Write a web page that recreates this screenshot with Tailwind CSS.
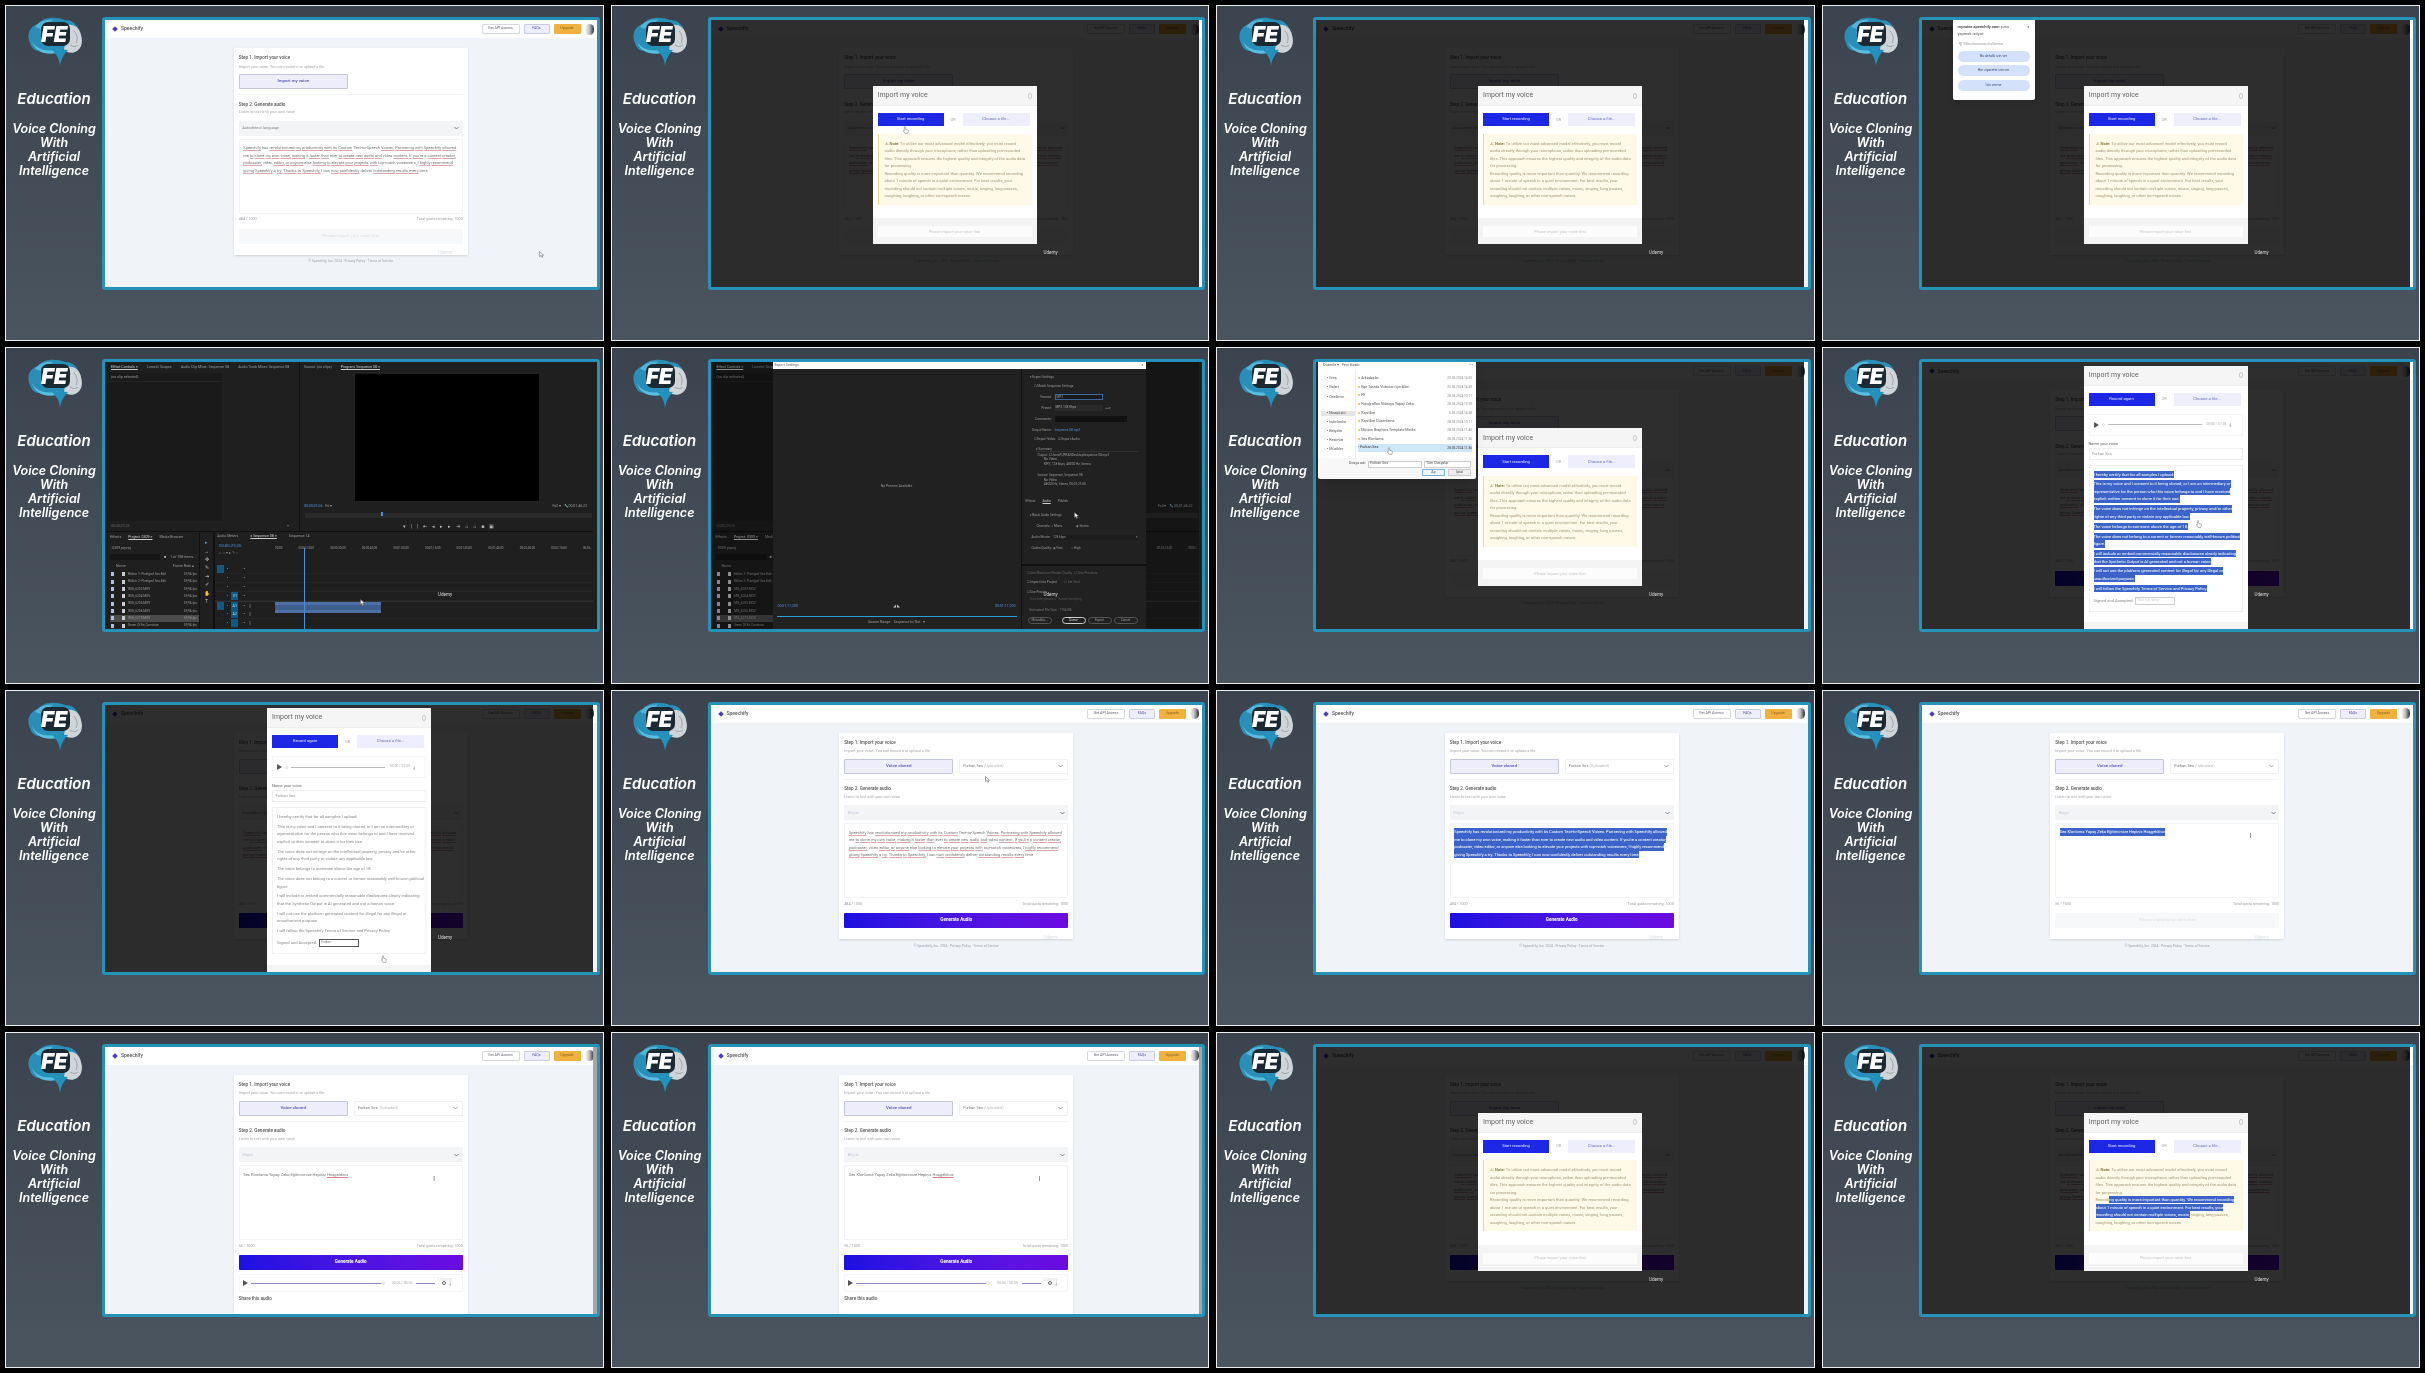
<!DOCTYPE html>
<html lang="en">

<head>
    <meta charset="UTF-8">
    <meta name="viewport" content="width=device-width, initial-scale=1.0">
    <title>Voice Cloning With Artificial Intelligence</title>
    <script src="https://cdn.jsdelivr.net/npm/@tailwindcss/browser@4"></script>
</head>

<body class="bg-black">
    <!-- Contact sheet: 4 x 4 video frames -->
    <div id="sheet" class="grid grid-cols-4 grid-rows-4 gap-x-[7px] gap-y-[6px] p-[5px] w-[2425px] h-[1373px] bg-black overflow-hidden blur-[0.35px] [font-family:Roboto,sans-serif]"></div>

    <script>
        // Side column logo, FE stays real text
        var logo = `
            <svg width="55" height="49" viewBox="0 0 55 49">
                <path d="M3 26C-1 18 3 9 11 7C16 0 28-1 38 3C46 3 50 8 52 13L40 30C34 36 20 36 12 34C7 34 4 30 3 26Z" fill="#2a8fb8"/>
                <path d="M41 8C48 7 53 12 54 18C56 24 55 31 50 34C46 37 40 36 37 33Z" fill="#cfd4d8"/>
                <path d="M47 14C50 17 51 22 49 26M43 28C46 30 49 30 51 28" fill="none" stroke="#9aa3aa" stroke-width="1"/>
                <path d="M8 10C12 4 20 2 26 3L14 12Z" fill="#53b5d8"/>
                <path d="M5 24C10 34 22 35 31 32L30 36C20 38 8 36 5 24Z" fill="#57bfe0"/>
                <path d="M24 32C29 37 32 40 33 49C34 43 36 38 41 33Z" fill="#2292bd"/>
                <rect x="14" y="5" width="29" height="24" rx="7" fill="#1b2933"/>
                <text x="14" y="25" font-family="Inter" font-size="22" font-weight="900" font-style="italic" fill="#fff">FE</text>
            </svg>`;

        var arrow = (x, y) => `<svg class="absolute z-40" style="left:${x}px;top:${y}px" width="5" height="7" viewBox="0 0 5 7"><path d="M.5.5V5.6L1.8 4.5 2.8 6.5 3.7 6 2.8 4.1H4.5Z" fill="#fff" stroke="#555" stroke-width=".5"/></svg>`;
        var hand = (x, y) => `<svg class="absolute z-40" style="left:${x}px;top:${y}px" width="6" height="8" viewBox="0 0 6 8"><path d="M2 .6C2.6.6 2.7 1 2.7 1.4V3.4L5 4C5.5 4.2 5.6 4.6 5.4 5.2L4.8 7.4H2L.5 5C.3 4.5.8 4.1 1.3 4.6V1.4C1.3 1 1.4.6 2 .6Z" fill="#fff" stroke="#666" stroke-width=".5"/></svg>`;
        var ibeam = (x, y) => `<div class="absolute z-40 text-[8px] leading-none text-[#777]" style="left:${x}px;top:${y}px">I</div>`;

        var chevron = (color) => `<svg width="5" height="4" viewBox="0 0 5 4"><path d="M.5 1 2.5 3 4.5 1" fill="none" stroke="${color}" stroke-width=".8"/></svg>`;

        var plainWords = new Set(['has', 'me', 'it', 'ever', 'video', 'a', 'else', 'top-notch', 'voiceovers,', 'I', 'can', 'deliver', 'time.', 'Text-to-Speech']);
        var speechLines = [
            "Speechify has revolutionized my productivity with its Custom Text-to-Speech Voices. Partnering with Speechify allowed",
            "me to clone my own voice, making it faster than ever to create new audio and video content. If you're a content creator,",
            "podcaster, video editor, or anyone else looking to elevate your projects with top-notch voiceovers, I highly recommend",
            "giving Speechify a try. Thanks to Speechify, I can now confidently deliver outstanding results every time."
        ];
        var spell = (line) => line.split(' ').map(w => plainWords.has(w) ? w :
            `<span class="underline decoration-[#dca4ac]">${w}</span>`).join(' ');
        var sel = (t) => `<span class="bg-[#3b63c8] text-white py-[1.2px]">${t}</span>`;

        var textareaBody = (opts) => {
            if (opts.short && opts.selected) return sel('Ses Klonlama Yapay Zeka Eğitimimize Hepiniz Hoşgeldiniz');
            if (opts.short) return `Ses Klonlama Yapay Zeka Eğitimimize Hepiniz <span class="underline decoration-[#d9808c]">Hoşgeldiniz</span>`;
            if (opts.selected) return speechLines.map(sel).join('<br>');
            return speechLines.map(spell).join('<br>');
        };

        // The Speechify page behind everything else
        var page = (opts = {}) => `
            <div class="flex flex-col h-full bg-[#f0f3f7]">
                <header class="flex items-center h-[18px] shrink-0 bg-white pl-[8px] pr-[3px]">
                    <div class="w-[4px] h-[4px] rotate-45 bg-[#4a3fc4]"></div>
                    <span class="ml-[4px] text-[5px] font-medium text-[#555]">Speechify</span>
                    <div class="flex items-center gap-[4px] ml-auto">
                        <div class="flex items-center justify-center w-[38px] h-[10px] rounded-[1px] border border-[#d5d8dd] bg-white text-[3.6px] text-[#667]">Get API Access</div>
                        <div class="flex items-center justify-center w-[26px] h-[10px] rounded-[1px] border border-[#c9cbe0] bg-[#eeedfc] text-[3.6px] text-[#5a5aa0]">FAQs</div>
                        <div class="flex items-center justify-center w-[27px] h-[10px] rounded-[1px] bg-[#f0b13f] text-[3.6px] text-[#8a6a20]">Upgrade</div>
                        <div class="w-[9px] h-[11px] rounded-full bg-linear-to-r from-white via-[#bbb] to-[#333]"></div>
                    </div>
                </header>
                <main class="flex flex-col items-center pt-[10px]">
                    <div class="w-[234px] shrink-0 rounded-[1px] bg-white shadow-sm px-[5px] pt-[7px] pb-[11px]">
                        <div class="h-[6px] text-[4.6px] leading-[6px] font-medium text-[#555]">Step 1. Import your voice</div>
                        <div class="mt-[2.5px] h-[5px] text-[3.8px] leading-[5px] text-[#a4a8ad]">Import your voice. You can record it or upload a file.</div>
                        <div class="flex gap-[6px] mt-[5.5px]">
                            <div class="flex items-center justify-center w-[109px] h-[15px] rounded-[1px] border border-[#c3c5d8] bg-[#eeedfc] text-[4.4px] font-medium text-[#5552b8]">${opts.cloned ? 'Voice cloned' : 'Import my voice'}</div>
                            ${opts.cloned ? `<div class="flex items-center justify-between w-[109px] h-[15px] rounded-[1px] border border-[#eef0f2] pl-[3px] pr-[4px] text-[4px] text-[#777]"><span>Furkan Ses <span class="text-[#bbb]">(Uploaded)</span></span>${chevron('#888')}</div>` : ''}
                        </div>
                        <div class="mt-[5px] border-t border-[#f3f4f6]"></div>
                        <div class="mt-[6.5px] h-[6px] text-[4.6px] leading-[6px] font-medium text-[#555]">Step 2. Generate audio</div>
                        <div class="mt-[1.5px] h-[5px] text-[3.8px] leading-[5px] text-[#a4a8ad]">Listen to text with your own voice</div>
                        <div class="flex items-center justify-between h-[15px] mt-[6.5px] rounded-[1px] bg-[#f3f4f6] px-[3.5px] text-[4px] ${opts.cloned ? 'text-[#ccd]' : 'text-[#888]'}">
                            <span>${opts.cloned ? 'Bilgisi' : 'Autodetect language'}</span>${chevron('#667')}
                        </div>
                        <div class="h-[75px] mt-[3px] rounded-[1px] border border-[#f3f4f6] px-[3.5px] pt-[4.5px] text-[4.05px] leading-[7.5px] whitespace-nowrap text-[#777]">${textareaBody(opts)}</div>
                        <div class="flex justify-between h-[5px] mt-[3.5px] text-[3.7px] leading-[5px] text-[#9a9ea4]">
                            <span>${opts.short ? '56 / 1000' : '484 / 1000'}</span><span>Total quota remaining: 1000</span>
                        </div>
                        ${opts.active
                            ? `<div class="flex items-center justify-center h-[15px] mt-[6.5px] rounded-[1px] bg-linear-to-r from-[#1c10e2] to-[#6c0ae2] text-[4.6px] font-bold text-white">Generate Audio</div>`
                            : `<div class="flex items-center justify-center h-[15px] mt-[6.5px] rounded-[1px] bg-[#f7f8f9] text-[4.4px] text-[#dcdee0]">Please import your voice first</div>`}
                        ${opts.audio ? `
                            <div class="flex items-center gap-[3px] h-[18px] mt-[4px] px-[3px] rounded-[1px] border border-[#f5f5f7]">
                                <div class="w-0 h-0 border-y-[3px] border-y-transparent border-l-[5px] border-l-[#555]"></div>
                                <div class="w-[130px] h-[1.5px] bg-[#8a86c8]"></div>
                                <div class="w-[4px] h-[4px] -ml-[3px] rounded-full border border-[#e5e5e5] bg-white"></div>
                                <span class="ml-[4px] text-[3.5px] text-[#aaa] whitespace-nowrap">00:06 / 00:06</span>
                                <div class="w-[19px] h-[1.5px] ml-[1px] bg-[#8a86c8]"></div>
                                <div class="w-[4px] h-[4px] ml-[4px] rounded-full border-[1.5px] border-[#666]"></div>
                                <div class="text-[5px] leading-none text-[#666]">⤓</div>
                            </div>
                            <div class="mt-[4px] text-[4.6px] font-medium text-[#555]">Share this audio</div>` : ''}
                    </div>
                    ${opts.audio ? '' : `<div class="mt-[4.5px] h-[5px] text-[3.4px] leading-[5px] text-[#a0a4aa]">© Speechify, Inc. 2024 · Privacy Policy · Terms of Service</div>`}
                </main>
            </div>
            ${opts.audio ? '<div class="absolute top-0 bottom-0 right-0 w-[3.5px] bg-[#a4a6a8]"></div>' : ''}`;

        var noteLines = [
            `<span class="text-[#8a7428]">⚠</span> <b class="font-medium text-[#7d6a2c]">Note:</b> To utilize our most advanced model effectively, you must record`,
            `audio directly through your microphone, rather than uploading pre-recorded`,
            `files. This approach ensures the highest quality and integrity of the audio data`,
            `for processing.`,
            `Recording quality is more important than quantity. We recommend recording`,
            `about 1 minute of speech in a quiet environment. For best results, your`,
            `recording should not contain multiple voices, music, singing, long pauses,`,
            `coughing, laughing, or other non-speech noises.`
        ];
        var noteSelected = noteLines.slice(0, 4).concat([
            `Recordi${sel('ng quality is more important than quantity. We recommend recording')}`,
            sel('about 1 minute of speech in a quiet environment. For best results, your'),
            `${sel('recording should not contain multiple voices, music,')} singing, long pauses,`,
            `coughing, laughing, or other non-speech noises.`
        ]);

        var modalHead = (recordLabel) => `
            <div class="flex items-center justify-between h-[20px] bg-[#f5f5f5] px-[5px] border-b border-[#eee]">
                <span class="text-[7px] text-[#666]">Import my voice</span>
                <div class="w-[4px] h-[6px] rounded-full border border-[#ccc]"></div>
            </div>
            <div class="flex items-center h-[13px] mt-[7px] px-[5px]">
                <div class="flex items-center justify-center w-[66px] h-[13px] bg-[#1d27e6] text-[4.2px] text-[#dfe1ff]">${recordLabel}</div>
                <div class="w-[19px] text-center text-[4px] text-[#aaa]">OR</div>
                <div class="flex items-center justify-center w-[67px] h-[13px] bg-[#eeeefc] text-[4.2px] text-[#6f72c2]">Choose a file...</div>
            </div>`;

        // First look of the import dialog, with the note
        var noteModal = (selected) => `
            <div class="absolute inset-0 right-[3.5px] bg-black/[.82]"></div>
            <div class="absolute left-[162px] top-[66px] w-[164px] h-[158px] flex flex-col bg-white rounded-[1px]">
                ${modalHead('Start recording')}
                <div class="mx-[5px] mt-[7.5px] h-[71px] border-l border-[#ecd48c] bg-[#fff9e8] pl-[6px] pt-[6px] text-[4.1px] leading-[7.5px] whitespace-nowrap text-[#a49a78]">
                    ${(selected ? noteSelected : noteLines).join('<br>')}
                </div>
                <div class="mt-auto h-[26px] bg-[#f4f4f4] px-[5px] pt-[8px]">
                    <div class="flex items-center justify-center h-[11px] bg-white/70 text-[4px] text-[#c6c8cc]">Please import your voice first</div>
                </div>
            </div>`;

        var consentLines = [
            ['I hereby certify that for all samples I upload:'],
            ['This is my voice and I consent to it being cloned, or I am an intermediary or', 'representative for the person who this voice belongs to and I have received', 'explicit written consent to clone it for their use.'],
            ['The voice does not infringe on the intellectual property, privacy and/or other', 'rights of any third party or violate any applicable law.'],
            ['The voice belongs to someone above the age of 18.'],
            ['The voice does not belong to a current or former reasonably well-known political', 'figure.'],
            ['I will include or embed commercially reasonable disclosures clearly indicating', 'that the Synthetic Output is AI generated and not a human voice.'],
            ['I will not use the platform generated content for illegal for any illegal or', 'unauthorized purpose.'],
            ['I will follow the Speechify Terms of Service and Privacy Policy.']
        ];

        // Dialog after recording, consent text on show
        var consentModal = (selected, typed) => `
            <div class="absolute inset-0 right-[3.5px] bg-black/[.82]"></div>
            <div class="absolute left-[162px] top-[3.5px] bottom-0 w-[164px] flex flex-col bg-white overflow-hidden">
                ${modalHead('Record again')}
                <div class="flex items-center gap-[3px] h-[22px] mt-[8px] mx-[5px] border border-[#f5f5f5] px-[4px]">
                    <div class="w-0 h-0 border-y-[3.5px] border-y-transparent border-l-[5px] border-l-[#555]"></div>
                    <div class="w-[3px] h-[3px] rounded-full border border-[#ddd]"></div>
                    <div class="w-[94px] h-[1px] bg-[#bbb]"></div>
                    <span class="ml-[2px] text-[3.4px] text-[#aaa] whitespace-nowrap">00:00 / 01:03</span>
                    <span class="text-[5px] leading-none text-[#666]">⤓</span>
                </div>
                <div class="mt-[5px] mx-[5px] text-[4px] leading-[5px] text-[#666]">Name your voice</div>
                <div class="flex items-center h-[12px] mt-[2px] mx-[5px] border border-[#eee] px-[2.5px] text-[4px] text-[#999]">Furkan Ses</div>
                <div class="h-[147px] mt-[5px] mx-[5px] border border-[#f0f0f0] px-[4px] pt-[5px] text-[4.15px] leading-[7.5px] whitespace-nowrap text-[#8a8a8a] flex flex-col gap-[2.4px]">
                    ${consentLines.map(block => `<div>${block.map(l => selected ? sel(l) : l).join('<br>')}</div>`).join('')}
                    <div class="flex items-center gap-[2px] mt-[2px]">
                        <span>Signed and Accepted:</span>
                        <div class="flex items-center w-[40px] h-[8px] border ${typed ? 'border-[#555] text-[#777]' : 'border-[#ccc] text-[#ccc]'} px-[1px] text-[3.4px]">${typed ? 'Furkan' : 'Your full name'}</div>
                    </div>
                </div>
                <div class="mt-auto h-[7px] bg-[#f4f4f4]"></div>
            </div>`;

        // Chrome mic prompt (Turkish browser)
        var micPrompt = `
            <div class="absolute left-[31px] top-0 z-30 w-[82px] h-[80px] rounded-b-[2px] bg-white shadow-md px-[5px] pt-[3px] text-[#555]">
                <div class="flex justify-between text-[4px] leading-[7px]"><span><b class="font-medium text-[#333]">myvoice.speechify.com</b> şunu<br>yapmak istiyor:</span><span>×</span></div>
                <div class="mt-[5px] text-[3.6px] text-[#999]">🎙 Mikrofonunuzu kullanma</div>
                ${['Bu defalık izin ver', 'Her ziyarette izin ver', 'İzin verme'].map(t =>
                    `<div class="flex items-center justify-center h-[11px] mt-[3.5px] rounded-full bg-[#d4e1fb] text-[3.5px] text-[#3d4f78]">${t}</div>`).join('')}
            </div>`;

        // Windows open-file dialog
        var fileRows = [
            ['Arkadaşlar', '23.05.2024 14:30'],
            ['Ege Tarzda Videoları İçerikleri', '23.05.2024 14:30'],
            ['FE', '28.05.2024 10:11'],
            ['Fotoğrafları Videoya Yapay Zeka', '28.05.2024 13:10'],
            ['Kapitlice', '5.05.2024 14:50'],
            ['Kapitlice Düzenleme', '28.05.2024 10:11'],
            ['Motion Graphics Template Media', '28.05.2024 11:40'],
            ['Ses Klonlama', '28.05.2024 11:36']
        ];
        var fileDialog = `
            <div class="absolute left-[2px] top-0 z-30 w-[158px] h-[117px] flex flex-col bg-[#f8f8f8] rounded-b-[2px] shadow-lg text-[3.7px] text-[#555]">
                <div class="flex justify-between items-center h-[7px] bg-white pl-[5px] pr-[3px]"><span>Düzenle ▾ &nbsp; Yeni klasör</span><span class="text-[#3a86c8]">▪ ▪</span></div>
                <div class="flex h-[89px] bg-white">
                    <div class="flex flex-col gap-[3.6px] w-[38px] pt-[7px] pl-[9px] border-r border-[#eee]">
                        <span>▪ Giriş</span><span>▪ Galeri</span><span>▪ OneDrive</span><span class="mt-[7px] -ml-[6px] pl-[6px] bg-[#e6e6e6]">▪ Masaüstü</span><span>▪ İndirilenler</span><span>▪ Belgeler</span><span>▪ Resimler</span><span>▪ Müzikler</span>
                    </div>
                    <div class="flex-1 pl-[2px] pr-[4px] pt-[5px]">
                        ${fileRows.map(r => `<div class="flex justify-between h-[8.7px] items-center"><span><span class="text-[#e9c04c]">■</span> ${r[0]}</span><span class="text-[#888] text-[3.2px]">${r[1]}</span></div>`).join('')}
                        <div class="flex justify-between h-[8.7px] items-center bg-[#cde6f7] text-[#333]"><span><span class="text-[#777]">▪</span> Furkan Ses</span><span class="text-[3.2px]">28.05.2024 11:36</span></div>
                    </div>
                </div>
                <div class="flex items-center justify-end gap-[2px] h-[10px] pr-[5px] mt-[1px]">
                    <span>Dosya adı:</span><div class="flex items-center w-[54px] h-[7px] border border-[#ccc] bg-white px-[1px]">Furkan Ses</div><div class="flex items-center w-[47px] h-[7px] border border-[#ccc] bg-white px-[1px]">Tüm Dosyalar</div>
                </div>
                <div class="flex justify-end gap-[3px] pr-[5px]">
                    <div class="flex items-center justify-center w-[23px] h-[7px] border border-[#7fb3d9] bg-[#eef5fa]">Aç</div>
                    <div class="flex items-center justify-center w-[23px] h-[7px] border border-[#ccc] bg-[#eee]">İptal</div>
                </div>
            </div>`;

        // Premiere Pro project, used by two frames
        var projectRows = ['Bölüm 1- Pixelgraf Ses.Edit', 'Bölüm 2- Pixelgraf Ses.Edit', 'IMG_6203.MOV', 'IMG_6204.MOV', 'IMG_6205.MOV', 'IMG_6206.MOV', 'IMG_6279.MOV', 'Green Of Es Construe'];
        var rulerMarks = ['00;00', '00;00;15;00', '00;00;30;00', '00;00;45;00', '00;01;00;00', '00;01;15;00', '00;01;30;00', '00;01;45;00', '00;02;00;00', '00;02;15;00', '00;02;'];
        var premiere = (timecode) => `
            <div class="flex flex-col h-full bg-[#1f1f1f] text-[3.6px] text-[#999] pr-[3.5px]">
                <div class="flex h-[170px] shrink-0 border-b border-[#111]">
                    <div class="w-[195px] border-r border-[#111] flex flex-col">
                        <div class="flex gap-[9px] h-[11px] items-center pl-[6px]"><span class="text-[#ccc] underline">Effect Controls ≡</span><span>Lumetri Scopes</span><span>Audio Clip Mixer: Sequence 08</span><span>Audio Track Mixer: Sequence 08</span></div>
                        <div class="flex flex-1">
                            <div class="w-[113px] ml-[4px] bg-[#1a1a1a] flex flex-col">
                                <div class="flex items-center h-[9px] pl-[2px] border-b border-[#252525]">(no clip selected)</div>
                            </div>
                            <div class="flex-1"></div>
                        </div>
                        <div class="flex justify-between items-center h-[10px] px-[6px] text-[#666]"><span>00;00;29;26</span><span>▾ ▫ ▫</span></div>
                    </div>
                    <div class="flex-1 flex flex-col pl-[4px]">
                        <div class="flex gap-[9px] h-[11px] items-center"><span>Source: (no clips)</span><span class="text-[#ccc] underline">Program: Sequence 08 ≡</span></div>
                        <div class="w-[184px] h-[127px] ml-[51px] mt-[1px] bg-black"></div>
                        <div class="flex justify-between items-center h-[9px] mt-[1px] pr-[6px]"><span class="text-[#4f8fdc]">00;00;29;26 &nbsp; <span class="text-[#999]">Fit ▾</span></span><span>Full ▾ &nbsp; 🔧 00;01;46;22</span></div>
                        <div class="relative h-[5px] mx-[1px] mt-[2px] bg-[#2a2a2a]"><div class="absolute left-[76px] -top-[1px] w-[2px] h-[4px] bg-[#4f8fdc]"></div></div>
                        <div class="flex justify-center gap-[5px] mt-[6px] text-[5px] leading-none text-[#bbb]"><span>▾</span><span>|</span><span>|</span><span>⇤</span><span>◂</span><span>▸</span><span>▸</span><span>⇥</span><span>⌂</span><span>⌂</span><span>■</span><span>▣</span></div>
                    </div>
                </div>
                <div class="flex flex-1 overflow-hidden">
                    <div class="w-[95px] flex flex-col border-r border-[#111] pl-[5px]">
                        <div class="flex gap-[7px] h-[10px] items-center mt-[1px]"><span>Effects</span><span class="text-[#ccc] underline">Project: 0309 ≡</span><span>Media Browser</span></div>
                        <div class="h-[9px] leading-[9px] mt-[1px]">▫ 0309.prproj</div>
                        <div class="flex items-center gap-[4px] mt-[1px] h-[7px]"><div class="w-[50px] h-[6px] bg-[#151515]"></div><span class="text-[#bbb]">■</span><span>1 of 108 items...</span></div>
                        <div class="flex justify-between h-[8px] items-center mt-[2px] pl-[6px] pr-[5px]"><span>Name</span><span>Frame Rate ▴</span></div>
                        ${projectRows.map((name, i) => `
                            <div class="flex items-center h-[7.5px] pl-[1px] pr-[2px] ${i === 6 ? 'bg-[#4b4b4b]' : ''}">
                                <div class="w-[3px] h-[4px] bg-[#b5bfe0]"></div>
                                <div class="w-[3px] h-[4px] ml-[8px] bg-[#ccc]"></div>
                                <span class="w-[43px] ml-[3px] overflow-hidden whitespace-nowrap text-[3.2px]">${name}</span>
                                <span class="ml-auto text-[3.2px]">59,94 fps</span>
                            </div>`).join('')}
                    </div>
                    <div class="w-[14px] flex flex-col items-center gap-[2.4px] pt-[7px] text-[5px] leading-[6px] text-[#bbb] border-r border-[#111]">
                        <span class="text-[#4f9ae0]">▸</span><span>→</span><span>✥</span><span>✎</span><span>⇥</span><span>✐</span><span>✋</span><span>T</span>
                    </div>
                    <div class="flex-1 flex flex-col relative border-l border-[#111]">
                        <div class="flex gap-[12px] items-center h-[9px] pl-[2px]"><span>Audio Meters</span><span class="text-[#ccc] underline">× Sequence 08 ≡</span><span>Sequence 14</span></div>
                        <div class="flex h-[24px] shrink-0">
                            <div class="w-[60px] pl-[4px] pt-[2px] text-[#4f8fdc] text-[4.4px]">${timecode}<div class="text-[4px] text-[#888]">⌂ ∩ ▾ ▸ ✎ ▫</div></div>
                            <div class="flex-1 flex justify-between pr-[2px] pt-[5px] text-[3px]">${rulerMarks.map(m => `<span>${m}</span>`).join('')}</div>
                        </div>
                        ${['', '', '', 'V1', 'A1', 'A2', 'Audio 1'].map((t, i) => `
                            <div class="flex items-stretch h-[9px] shrink-0 ${i === 4 ? 'border-t border-[#333]' : 'border-b border-[#252525]'}">
                                <div class="flex items-center gap-[3px] w-[60px] pl-[2px]">
                                    <span class="w-[7px] h-full ${i === 0 || i === 4 ? 'bg-[#0f5a85]' : ''}"></span>
                                    <span>▪</span>
                                    <span class="flex items-center justify-center w-[7px] h-full ${i > 2 ? 'bg-[#0f5a85] text-[#cde]' : ''}">${t && t.length < 3 ? t : ''}</span>
                                    <span>▫ ∘</span>${i > 3 ? '<span>▯</span>' : ''}
                                </div>
                                <div class="flex-1 relative">${i === 4 ? '<div class="absolute left-0 top-0 w-[106px] h-[11px] z-10 bg-[#3e5e8e] border-y-[3px] border-[#4e6fa3]"></div>' : ''}</div>
                            </div>`).join('')}
                        <div class="absolute left-[89px] top-[16px] bottom-0 w-[0.7px] bg-[#4f8fdc] z-20"></div>
                    </div>
                </div>
            </div>`;

        // Export Settings window over the project
        var exportWindow = `
            <div class="absolute inset-0 right-[3.5px] z-30 bg-black/30"></div>
            <div class="absolute left-[62px] top-0 bottom-0 z-30 w-[373px] flex flex-col bg-[#212121] text-[3.6px] text-[#999]">
                <div class="flex justify-between items-center h-[7px] shrink-0 bg-white px-[2px] text-[#666]"><span>Export Settings</span><span>×</span></div>
                <div class="flex flex-1">
                    <div class="relative w-[251px] flex flex-col border-r border-[#111]">
                        <div class="flex-1 flex items-center justify-center text-[3.4px]">No Preview Available</div>
                        <div class="flex justify-between h-[5px] leading-[5px] px-[5px] text-[#4f8fdc]"><span>00;01;11;200</span><span class="text-[#bbb]">◢ ◣</span><span>00;01;11;200</span></div>
                        <div class="h-[1.5px] mx-[4px] mt-[7px] bg-[#2aa0d8]"></div>
                        <div class="h-[10px] mb-[2px] flex items-center justify-center">Source Range: &nbsp; Sequence In/Out &nbsp; ▾</div>
                    </div>
                    <div class="flex-1 flex flex-col pl-[8px] pr-[8px] pt-[5.5px] text-[3.2px] leading-[5px]">
                        <div class="h-[5px]">▾ Export Settings</div>
                        <div class="h-[5px] mt-[4px] ml-[4px]">☐ Match Sequence Settings</div>
                        <div class="flex gap-[3px] items-center h-[6px] mt-[5.5px]"><span class="w-[22px] text-right">Format:</span><div class="w-[48px] h-[6px] px-[1px] bg-[#1a1a1a] border border-[#3c6aa0]">MP3</div></div>
                        <div class="flex gap-[3px] items-center h-[6px] mt-[5px]"><span class="w-[22px] text-right">Preset:</span><div class="w-[48px] h-[6px] px-[1px] bg-[#2a2a2a]">MP3 128 Kbps</div><span class="text-[#bbb]">▪ ▪ ▯</span></div>
                        <div class="flex gap-[3px] items-center h-[6px] mt-[5px]"><span class="w-[22px] text-right">Comments:</span><div class="w-[72px] h-[6px] bg-[#111]"></div></div>
                        <div class="flex gap-[3px] items-center h-[5px] mt-[5.5px]"><span class="w-[22px] text-right">Output Name:</span><span class="text-[#4f8fdc]">Sequence 08.mp3</span></div>
                        <div class="h-[5px] mt-[4px] ml-[4px]">☐ Export Video &nbsp; ☑ Export Audio</div>
                        <div class="h-[5px] mt-[5px] ml-[6px] border-b border-[#333]">▾ Summary</div>
                        <div class="ml-[8px] mt-[1px] leading-[4.5px]">Output: C:\Users\FURKAN\Desktop\Sequence 08.mp3<br>&nbsp; &nbsp; &nbsp; &nbsp; No Video<br>&nbsp; &nbsp; &nbsp; &nbsp; MP3, 128 kbps, 48000 Hz, Stereo</div>
                        <div class="ml-[8px] mt-[7px] leading-[4.5px]">Source: Sequence, Sequence 08<br>&nbsp; &nbsp; &nbsp; &nbsp; No Video<br>&nbsp; &nbsp; &nbsp; &nbsp; 48000 Hz, Stereo, 00;01;21;00</div>
                        <div class="flex gap-[7px] h-[5px] mt-[12px] -ml-[4px]"><span>Effects</span><span class="text-[#ccc] underline">Audio</span><span>Publish</span></div>
                        <div class="h-[5px] mt-[9px]">▾ Basic Audio Settings</div>
                        <div class="h-[5px] mt-[6px] ml-[7px]">Channels: ○ Mono &nbsp; &nbsp; &nbsp; &nbsp; &nbsp; &nbsp; &nbsp; &nbsp; ◉ Stereo</div>
                        <div class="flex justify-between h-[5px] mt-[6px] ml-[2px] bg-[#1c1c1c]"><span>Audio Bitrate: &nbsp; 128 kbps</span><span>▾</span></div>
                        <div class="h-[5px] mt-[6px] ml-[2px]">Codec Quality: ◉ Fast &nbsp; &nbsp; &nbsp; &nbsp; &nbsp; ○ High</div>
                        <div class="mt-[13.5px] -mx-[8px] px-[5px] pt-[2.5px] leading-[9.5px] border-t-2 border-[#111] text-[#666]">☐ Use Maximum Render Quality &nbsp; ☐ Use Previews<br><span class="text-[#999]">☐ Import Into Project</span> &nbsp; &nbsp; &nbsp; &nbsp; ☐ Set Start<br><span class="text-[#999]">☐ Use Proxies</span></div>
                        <div class="h-[5px] text-[#555]">Time Interpolation: &nbsp; Frame Sampling</div>
                        <div class="h-[5px] mt-[6px] text-[#777]">Estimated File Size: &nbsp; 1194 KB</div>
                        <div class="flex h-[7px] mt-[4px] -ml-[2px] text-center">
                            <div class="w-[24px] rounded-full border border-[#555]">Metadata...</div><div class="w-[24px] ml-[10px] rounded-full border border-[#ccc] text-[#ccc]">Queue</div><div class="w-[24px] ml-[2px] rounded-full border border-[#555]">Export</div><div class="w-[24px] ml-[2px] rounded-full border border-[#555]">Cancel</div>
                        </div>
                    </div>
                </div>
            </div>`;

        var udemy = (dark) => `<div class="absolute left-[333px] top-[230px] z-50 text-[4.6px] ${dark ? 'text-[#d8d8d8]' : 'text-[#dfe1e4]'}">Udemy</div>`;

        var frames = [
            page() + arrow(434, 231) + udemy(false),
            page() + noteModal(false) + hand(192, 106) + udemy(true),
            page() + noteModal(false) + udemy(true),
            page() + micPrompt + noteModal(false) + udemy(true),
            premiere('00;00;29;26') + arrow(255, 237) + udemy(true),
            premiere('00;00;29;26') + exportWindow + arrow(363, 150) + udemy(true),
            page() + noteModal(false) + fileDialog + hand(71, 85) + udemy(true),
            page({ active: true }) + consentModal(true, false) + hand(274, 158) + udemy(true),
            page({ active: true }) + consentModal(false, true) + hand(276, 250) + udemy(true),
            page({ cloned: true, active: true }) + arrow(274, 71) + udemy(false),
            page({ cloned: true, active: true, selected: true }) + udemy(false),
            page({ cloned: true, short: true, selected: true }) + ibeam(328, 127) + udemy(false),
            page({ cloned: true, active: true, short: true, audio: true }) + ibeam(328, 128) + udemy(false),
            page({ cloned: true, active: true, short: true, audio: true }) + ibeam(328, 128) + udemy(false),
            page({ active: true }) + noteModal(false) + udemy(true),
            page({ active: true }) + noteModal(true) + udemy(true)
        ];

        document.getElementById('sheet').innerHTML = frames.map(frame => `
            <div class="flex items-start pt-[11px] border border-white/90 bg-linear-to-b from-[#3b444e] to-[#4b555f] overflow-hidden">
                <div class="flex flex-col items-center w-[96px] shrink-0 text-white italic font-bold [font-family:Inter,sans-serif]">
                    ${logo}
                    <div class="mt-[25px] text-[15px] leading-[16px] font-semibold">Education</div>
                    <div class="mt-[15px] text-[12.5px] leading-[14px] text-center font-semibold whitespace-nowrap">Voice Cloning<br>With<br>Artificial<br>Intelligence</div>
                </div>
                <div class="relative w-[497.5px] h-[273px] shrink-0 border-[3px] border-[#2593b8] rounded-[3px] overflow-hidden bg-[#f0f3f7]">
                    ${frame}
                </div>
            </div>`).join('');
    </script>
</body>

</html>
